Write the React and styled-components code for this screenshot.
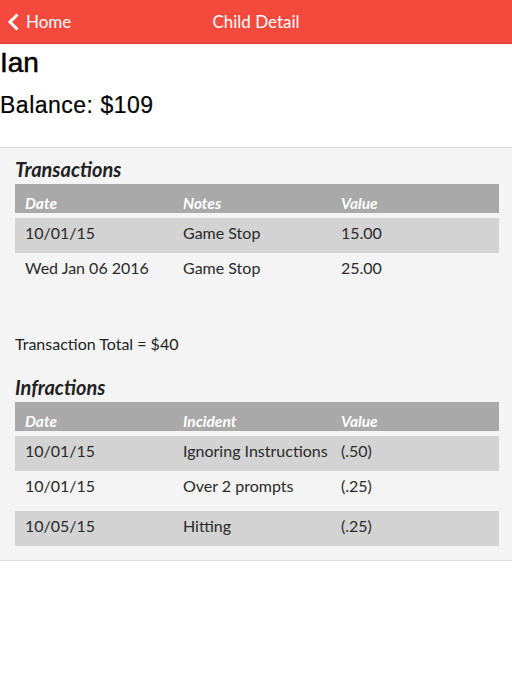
import React from "react";
import styled, { createGlobalStyle } from "styled-components";

const GlobalStyle = createGlobalStyle`
  html, body { margin: 0; padding: 0; background: #ffffff; }
  body { font-family: Lato, "Liberation Sans", sans-serif; }
  * { box-sizing: border-box; }
`;

const Page = styled.div`
  width: 512px;
  min-height: 676px;
  background: #fff;
`;

const NavBar = styled.header`
  height: 44px;
  background: #f44a3e;
  border-bottom: 1px solid #d9392e;
  display: grid;
  grid-template-columns: 1fr auto 1fr;
  align-items: center;
  color: #fff;
  font-family: Lato, sans-serif;
  font-size: 17px;
  line-height: 20px;
`;

const BackButton = styled.div`
  display: flex;
  align-items: center;
  gap: 6px;
  padding-left: 7px;
`;

const NavTitle = styled.div`
  text-align: center;
`;

const Name = styled.h1`
  margin: 3px 0 0;
  font-family: "Liberation Sans", Arial, sans-serif;
  font-weight: normal;
  -webkit-text-stroke: 0.5px #000;
  font-size: 28px;
  line-height: 32px;
  color: #000;
`;

const Balance = styled.h2`
  margin: 13px 0 0;
  font-family: "Liberation Sans", Arial, sans-serif;
  font-weight: normal;
  -webkit-text-stroke: 0.2px #000;
  font-size: 23px;
  letter-spacing: 0.5px;
  line-height: 26px;
  color: #000;
`;

const Section = styled.section`
  margin-top: 29px;
  background: #f4f4f4;
  border-top: 1px solid #dcdcdc;
  border-bottom: 1px solid #dcdcdc;
  padding: 9px 13px 14px 15px;
`;

const SectionTitle = styled.h3`
  margin: ${(p) => p.$top || 0}px 0 3px;
  font-family: Lato, sans-serif;
  font-style: italic;
  font-weight: bold;
  font-size: 20px;
  line-height: 24px;
  color: #222;
`;

const Grid = styled.div`
  display: grid;
  grid-template-columns: 158px 158px 1fr;
`;

const HeadRow = styled(Grid)`
  height: 29px;
  background: #a9a9a9;
  align-items: end;
  padding-bottom: 1px;
`;

const HeadCell = styled.div`
  padding-left: 10px;
  font-family: Lato, sans-serif;
  font-style: italic;
  font-weight: bold;
  font-size: 15.5px;
  line-height: 18px;
  color: #fff;
`;

const Row = styled(Grid)`
  height: 35px;
  margin-top: ${(p) => (p.$gap ? 5 : 0)}px;
  background: ${(p) => (p.$shaded ? "#d3d3d3" : "transparent")};
`;

const Cell = styled.div`
  padding: 5px 0 0 10px;
  font-family: Lato, sans-serif;
  font-size: 16px;
  line-height: 19px;
  color: #2a2a2a;
  white-space: nowrap;
`;

const Total = styled.p`
  margin: 46px 0 0;
  font-family: Lato, sans-serif;
  font-size: 16px;
  line-height: 19px;
  color: #222;
`;

const Chevron = () => (
  <svg width="13" height="18" viewBox="0 0 13 18">
    <polyline
      points="10.5,1.5 3,9 10.5,16.5"
      fill="none"
      stroke="#fff"
      strokeWidth="3"
      strokeLinecap="butt"
      strokeLinejoin="miter"
    />
  </svg>
);

const transactions = [
  { date: "10/01/15", note: "Game Stop", value: "15.00", shaded: true, gap: true },
  { date: "Wed Jan 06 2016", note: "Game Stop", value: "25.00" },
];

const infractions = [
  { date: "10/01/15", note: "Ignoring Instructions", value: "(.50)", shaded: true, gap: true },
  { date: "10/01/15", note: "Over 2 prompts", value: "(.25)" },
  { date: "10/05/15", note: "Hitting", value: "(.25)", shaded: true, gap: true },
];

const Table = ({ cols, rows }) => (
  <div>
    <HeadRow>
      {cols.map((c) => (
        <HeadCell key={c}>{c}</HeadCell>
      ))}
    </HeadRow>
    {rows.map((r, i) => (
      <Row key={i} $shaded={r.shaded} $gap={r.gap}>
        <Cell>{r.date}</Cell>
        <Cell>{r.note}</Cell>
        <Cell>{r.value}</Cell>
      </Row>
    ))}
  </div>
);

export default function App() {
  return (
    <Page>
      <GlobalStyle />
      <NavBar>
        <BackButton>
          <Chevron />
          <span>Home</span>
        </BackButton>
        <NavTitle>Child Detail</NavTitle>
        <div />
      </NavBar>
      <Name>Ian</Name>
      <Balance>Balance: $109</Balance>
      <Section>
        <SectionTitle>Transactions</SectionTitle>
        <Table cols={["Date", "Notes", "Value"]} rows={transactions} />
        <Total>Transaction Total = $40</Total>
        <SectionTitle $top={22}>Infractions</SectionTitle>
        <Table cols={["Date", "Incident", "Value"]} rows={infractions} />
      </Section>
    </Page>
  );
}
